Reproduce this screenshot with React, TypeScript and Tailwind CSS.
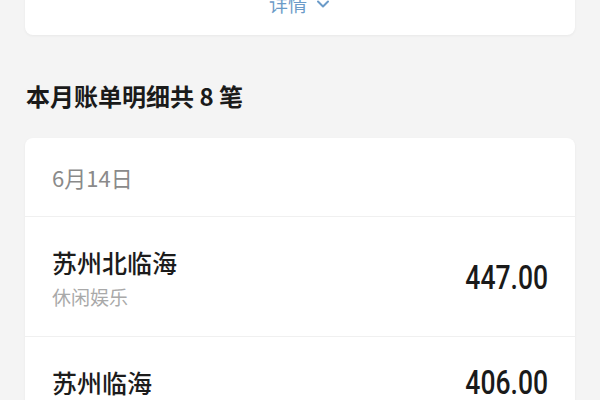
import React from "react";

const cjk = { fontFamily: '"Noto Sans CJK SC", "Noto Sans", sans-serif' };
const num = { fontFamily: 'Roboto, "Noto Sans", sans-serif' };

function Row({ title, sub, amount, h }: { title: string; sub?: string; amount: string; h: string }) {
  return (
    <div className={`flex items-center justify-between px-[27px] ${h}`}>
      <div className="self-start pt-[28px]">
        <div className="text-[25px] leading-[34px] font-medium text-[#1c1c1c]">{title}</div>
        {sub && <div className="text-[19px] leading-[36px] text-[#a9a9a9]">{sub}</div>}
      </div>
      <div
        className="origin-right scale-x-[0.78] text-[34px] leading-[36px] font-medium text-[#1a1a1a]"
        style={num}
      >
        {amount}
      </div>
    </div>
  );
}

export default function App() {
  return (
    <div className="w-[600px] h-[400px] overflow-hidden bg-[#f4f4f4] px-[25px]" style={cjk}>
      <div className="-mt-[27px] h-[62px] rounded-[8px] bg-white shadow-[0_1px_3px_rgba(0,0,0,0.05)] flex items-center justify-center gap-[8px] text-[#6b9bc8]">
        <span className="text-[19px] leading-[24px]">详情</span>
        <svg width="16" height="16" viewBox="0 0 16 16" fill="none" stroke="#6b9bc8" strokeWidth="2" strokeLinecap="round" strokeLinejoin="round">
          <path d="M3 5.5 L8 10.5 L13 5.5" />
        </svg>
      </div>
      <div className="mt-[45px] text-[24px] leading-[32px] font-bold text-[#1a1a1a] pl-[1px]">本月账单明细共 8 笔</div>
      <div className="mt-[26px] rounded-[8px] bg-white shadow-[0_1px_3px_rgba(0,0,0,0.05)]">
        <div className="h-[78px] flex items-center pl-[27px] text-[22px] text-[#8a8a8a]">6月14日</div>
        <div className="h-px bg-[#f0f0f0]" />
        <Row title="苏州北临海" sub="休闲娱乐" amount="447.00" h="h-[119px]" />
        <div className="h-px bg-[#f0f0f0]" />
        <Row title="苏州临海" amount="406.00" h="h-[90px]" />
      </div>
    </div>
  );
}
